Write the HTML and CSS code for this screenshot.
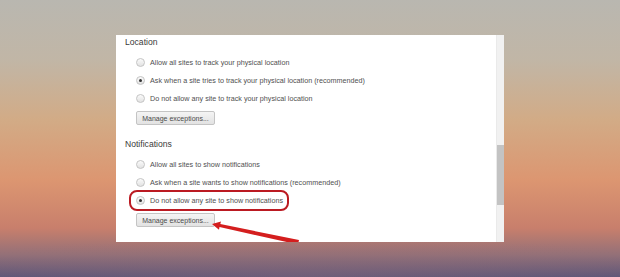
FILE: index.html
```html
<!DOCTYPE html>
<html lang="en">
<head>
    <meta charset="UTF-8">
    <title>Content settings</title>
    <link rel="stylesheet" href="styles.css">
</head>
<body>
    <div class="panel">
        <div class="content">
            <h3 class="heading">Location</h3>
            <div class="options">
                <div class="row"><span class="radio"></span>Allow all sites to track your physical location</div>
                <div class="row"><span class="radio checked"></span>Ask when a site tries to track your physical location (recommended)</div>
                <div class="row"><span class="radio"></span>Do not allow any site to track your physical location</div>
            </div>
            <button class="btn">Manage exceptions...</button>

            <h3 class="heading second">Notifications</h3>
            <div class="options">
                <div class="row"><span class="radio"></span>Allow all sites to show notifications</div>
                <div class="row"><span class="radio"></span>Ask when a site wants to show notifications (recommended)</div>
                <div class="row highlight"><span class="radio checked"></span>Do not allow any site to show notifications</div>
            </div>
            <button class="btn">Manage exceptions...</button>
        </div>
        <div class="scrollbar">
            <div class="thumb"></div>
        </div>
        <svg class="arrow" width="388" height="207" viewBox="0 0 388 207">
            <polygon points="96,189 105,186.4 104.3,189.1 183,205 182,209.5 103.5,192.1 103,194.8" fill="#d41e1e"/>
        </svg>
    </div>
</body>
</html>
```
FILE: styles.css
```css
* {
    margin: 0;
    padding: 0;
    box-sizing: border-box;
}

body {
    height: 277px;
    overflow: hidden;
    font-family: 'Liberation Sans', Arial, sans-serif;
    background:
        radial-gradient(ellipse 70% 40px at 50% 100%, rgba(150, 110, 120, 0.35), transparent),
        linear-gradient(to bottom, #b9b7b0 0px, #c1b6a6 60px, #d2ab86 120px, #dc9671 180px, #c87f6c 228px, #937078 255px, #5a5579 277px);
    padding: 35px 0 0 116px;
}

.panel {
    position: relative;
    display: flex;
    width: 388px;
    height: 207px;
    background: #fff;
    overflow: hidden;
}

.content {
    flex: 1;
    padding-left: 9px;
}

.heading {
    font-size: 8.6px;
    font-weight: normal;
    color: #3a3a3a;
    line-height: 14px;
}

.heading.second {
    margin-top: 12px;
}

.options {
    margin-top: 4px;
    margin-left: 6px;
}

.row {
    display: flex;
    align-items: center;
    width: fit-content;
    height: 18px;
    padding: 0 4px 0 5px;
    font-size: 7.2px;
    color: #505050;
    border-radius: 6px;
}

.row.highlight {
    outline: 2px solid #bb1a22;
    outline-offset: 0;
    height: 17px;
    margin-top: 1px;
}

.radio {
    width: 9px;
    height: 9px;
    margin-right: 5px;
    border: 1px solid #c4c4c4;
    border-radius: 50%;
    background: linear-gradient(#fbfbfb, #e2e2e2);
    position: relative;
}

.radio.checked::after {
    content: '';
    position: absolute;
    left: 2px;
    top: 2px;
    width: 3px;
    height: 3px;
    border-radius: 50%;
    background: #333;
}

.btn {
    display: block;
    margin: 4px 0 0 11px;
    width: 79px;
    height: 14px;
    border: 1px solid #c4c4c4;
    border-radius: 2px;
    background: linear-gradient(#f4f4f4, #e2e2e2);
    font-family: 'Liberation Sans', Arial, sans-serif;
    font-size: 7px;
    color: #4a4a4a;
}

.scrollbar {
    position: relative;
    width: 8px;
    background: #f1f1f1;
    border-left: 1px solid #eaeaea;
}

.thumb {
    margin-top: 110px;
    height: 60px;
    background: #c3c3c3;
}

.arrow {
    position: absolute;
    left: 0;
    top: 0;
}
```
